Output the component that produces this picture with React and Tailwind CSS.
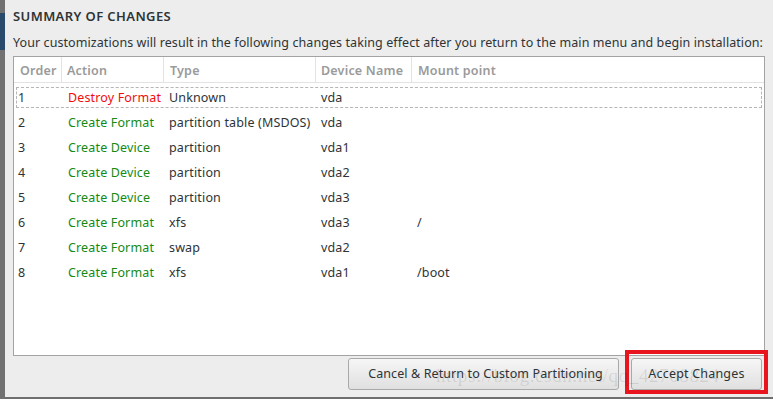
import React from "react";

const rows = [
  ["1", "Destroy Format", "Unknown", "vda", "", true],
  ["2", "Create Format", "partition table (MSDOS)", "vda", ""],
  ["3", "Create Device", "partition", "vda1", ""],
  ["4", "Create Device", "partition", "vda2", ""],
  ["5", "Create Device", "partition", "vda3", ""],
  ["6", "Create Format", "xfs", "vda3", "/"],
  ["7", "Create Format", "swap", "vda2", ""],
  ["8", "Create Format", "xfs", "vda1", "/boot"],
];

export default function App() {
  return (
    <div
      className="relative w-[773px] h-[399px] flex overflow-hidden bg-[#ededed] text-[#2e3436]"
      style={{ fontFamily: '"Noto Sans", "DejaVu Sans", sans-serif' }}
    >
      <div className="w-[5px] shrink-0 h-full flex flex-col bg-[#717171]">
        <div className="h-[13px]" />
        <div className="h-[37px] bg-[#2a4a6c]" />
      </div>
      <div className="flex-1 min-w-0 flex flex-col border-b-2 border-[#6e6e6e]">
        <div className="pl-[8px] flex flex-col">
          <div className="h-[18px] mt-[7px] text-[13px] font-semibold leading-[18px] tracking-[0.4px]">
            SUMMARY OF CHANGES
          </div>
          <div className="h-[18px] mt-[8px] pt-[1px] text-[12.5px] leading-[18px] whitespace-nowrap tracking-[0.08px]">
            Your customizations will result in the following changes taking effect after you return to the main menu and begin installation:
          </div>
          <div className="mt-[5px] w-[752px] h-[300px] border border-[#a3a3a3] bg-white flex flex-col">
            <div className="h-[26px] flex border-b border-[#e3e3e3] text-[12.5px] font-semibold text-[#9a9a9a] tracking-[0.2px]">
              <div className="w-[48px] pl-[6px] pt-[3px] flex items-center border-r border-[#e3e3e3]">Order</div>
              <div className="w-[102px] pl-[5px] pt-[3px] flex items-center border-r border-[#e3e3e3]">Action</div>
              <div className="w-[152px] pl-[6px] pt-[3px] flex items-center border-r border-[#e3e3e3]">Type</div>
              <div className="w-[96px] pl-[5px] pt-[3px] flex items-center border-r border-[#e3e3e3]">Device Name</div>
              <div className="flex-1 pl-[6px] pt-[3px] flex items-center">Mount point</div>
            </div>
            <div className="pt-[2px] flex flex-col text-[12.5px] tracking-[0.15px]">
              {rows.map((r) => (
                <div key={r[0]} className="h-[25px] px-[2px] py-[2px] flex">
                  <div
                    className={
                      "flex-1 flex items-center pt-[2px] border border-dashed " +
                      (r[5] ? "border-[#b5b5b5]" : "border-transparent")
                    }
                  >
                    <div className="w-[51px] pl-[1px]">{r[0]}</div>
                    <div className={"w-[101px] " + (r[5] ? "text-[#f20d0d]" : "text-[#138a13]")}>{r[1]}</div>
                    <div className="w-[152px]">{r[2]}</div>
                    <div className="w-[96px]">{r[3]}</div>
                    <div className="flex-1">{r[4]}</div>
                  </div>
                </div>
              ))}
            </div>
          </div>
          <div className="mt-[2px] w-[752px] flex justify-end items-start pr-[3px]">
            <button className="w-[271px] h-[32px] pl-[4px] rounded-[3px] border border-[#a9a9a9] bg-gradient-to-b from-[#f6f6f6] to-[#e0e0e0] text-[12.5px] tracking-[0.1px] text-[#2e3436]">
              Cancel &amp; Return to Custom Partitioning
            </button>
            <button className="ml-[12px] w-[131px] h-[32px] rounded-[3px] border border-[#a9a9a9] bg-gradient-to-b from-[#f6f6f6] to-[#e0e0e0] text-[12.5px] tracking-[0.2px] text-[#2e3436]">
              Accept Changes
            </button>
          </div>
        </div>
      </div>
      <div className="absolute left-[625px] top-[350px] w-[143px] h-[44px] border-[4px] border-[#e8141e] pointer-events-none" />
      <div
        className="absolute left-[436px] top-[362px] text-[19px] tracking-[0.6px] text-[#000000]/[0.1] whitespace-nowrap pointer-events-none"
        style={{ fontFamily: '"Liberation Serif", serif' }}
      >
        https://blog.csdn.net/qq_42708824
      </div>
    </div>
  );
}
